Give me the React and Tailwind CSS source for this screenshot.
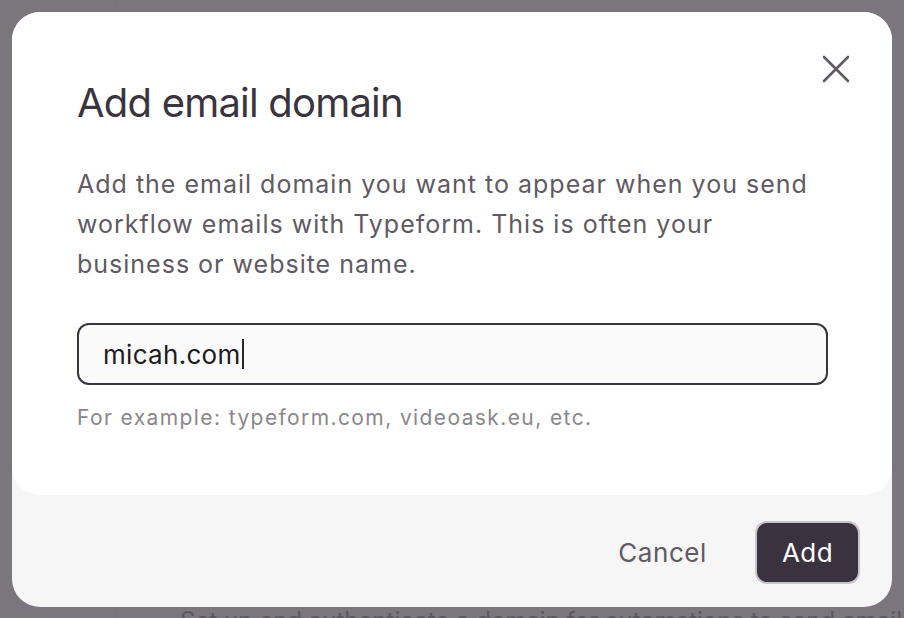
import React from 'react';

const CloseIcon = () => (
    <svg width="28" height="28" viewBox="0 0 28 28" fill="none">
        <path d="M2 2L26 26M26 2L2 26" stroke="#5f5a63" strokeWidth="2.6" strokeLinecap="round" />
    </svg>
);

export default function App() {
    return (
        <div className="relative h-[618px] w-full overflow-hidden bg-[#7b767e] font-['Inter',sans-serif]">
            {/* faint page behind the overlay */}
            <div className="absolute left-[115px] top-0 h-full w-px bg-[#76717a]" />
            <div className="absolute left-[180px] top-[603px] whitespace-nowrap text-[24px] text-[#5c5760]">
                Set up and authenticate a domain for automations to send emails
            </div>

            {/* modal */}
            <div className="relative m-[12px] h-[595px] w-[880px] overflow-hidden rounded-[28px] bg-[#f6f6f6]">
                <div className="relative h-[483px] rounded-b-[28px] bg-white px-[65px] pt-[67px]">
                    <button className="absolute right-[42px] top-[43px] p-0">
                        <CloseIcon />
                    </button>
                    <h1 className="text-[40px] leading-[48px] font-normal tracking-[-0.8px] text-[#3a343e]">
                        Add email domain
                    </h1>
                    <p className="mt-[37px] w-[745px] text-[25px] leading-[40px] tracking-[1px] text-[#5f5a63]">
                        Add the email domain you want to appear when you send workflow emails with Typeform. This is often your business or website name.
                    </p>
                    <div className="mt-[39px] flex h-[62px] w-[751px] items-center rounded-[12px] border-2 border-[#3a343e] bg-[#fafafa] px-[24px]">
                        <span className="text-[26px] tracking-[0.3px] text-[#1f1b22]">micah.com</span>
                        <span className="ml-px h-[30px] w-[2px] bg-[#2a252d]" />
                    </div>
                    <p className="mt-[19px] text-[21px] leading-[28px] tracking-[1.4px] text-[#8a868c]">
                        For example: typeform.com, videoask.eu, etc.
                    </p>
                </div>
                <div className="flex h-[112px] items-center justify-end gap-[48px] pr-[32px] pt-[2px]">
                    <button className="text-[26px] tracking-[0.6px] text-[#5f5a63]">Cancel</button>
                    <button className="flex h-[63px] w-[105px] items-center justify-center rounded-[12px] border-2 border-[#c7c5c9] bg-[#3a333f] text-[26px] tracking-[0.4px] text-white">
                        Add
                    </button>
                </div>
            </div>
        </div>
    );
}
